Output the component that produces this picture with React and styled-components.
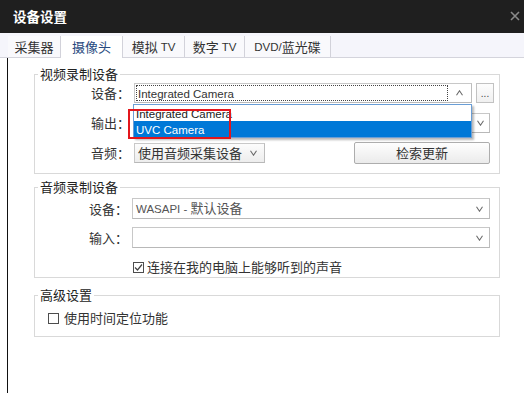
import React from "react";
import styled, { createGlobalStyle } from "styled-components";

const CJK = `"Noto Sans CJK SC", "Liberation Sans", sans-serif`;
const LAT = `"Liberation Sans", "Noto Sans CJK SC", sans-serif`;

const Global = createGlobalStyle`
  html, body { margin: 0; padding: 0; background: #fff; }
  body { font-family: ${CJK}; font-size: 13px; color: #333; }
  * { box-sizing: border-box; }
`;

const Window = styled.div`
  width: 524px;
  height: 393px;
  display: flex;
  flex-direction: column;
  background: #fff;
  overflow: hidden;
`;

const TitleBar = styled.div`
  height: 33px;
  flex: none;
  background: #1f1f1f;
  display: flex;
  align-items: center;
  justify-content: space-between;
  padding: 0 4px 1px 13px;
`;

const Title = styled.div`
  color: #fff;
  font-weight: bold;
  font-size: 13.5px;
  line-height: 16px;
`;

const CloseIcon = styled.svg`
  width: 10px;
  height: 10px;
  display: block;
`;

const TabBar = styled.div`
  height: 25px;
  flex: none;
  display: flex;
  align-items: flex-end;
  padding-left: 8px;
  background: #f5f5fb;
  border-bottom: 1px solid #d4d4dc;
`;

const Tab = styled.div`
  width: ${(p) => p.$w}px;
  height: ${(p) => (p.$active ? 22 : 21)}px;
  margin-bottom: ${(p) => (p.$active ? -1 : 0)}px;
  display: flex;
  align-items: center;
  justify-content: center;
  border-right: 1px solid #d2d2da;
  background: ${(p) => (p.$active ? "#ffffff" : "#f9f9fc")};
  color: ${(p) => (p.$active ? "#284a7e" : "#333")};
  font-size: 13px;
  line-height: 16px;
  padding-bottom: ${(p) => (p.$active ? 1 : 0)}px;
  white-space: pre;
`;

const Latin = styled.span`
  font-family: ${LAT};
  font-size: 11.5px;
  white-space: pre;
`;

const Body = styled.div`
  flex: 1;
  margin-left: 7px;
  border-left: 1px solid #111;
  padding: 8px 24px 0 26px;
  display: flex;
  flex-direction: column;
`;

const Group = styled.fieldset`
  margin: ${(p) => p.$mt}px 0 0;
  padding: ${(p) => p.$pt}px 9px ${(p) => p.$pb}px 0;
  border: 1px solid #d9d9d9;
  min-width: 0;
`;

const Legend = styled.legend`
  margin-left: 3px;
  padding: 0 2px;
  font-size: 13px;
  line-height: 16px;
  color: #222;
`;

const Row = styled.div`
  display: flex;
  align-items: center;
  height: ${(p) => p.$h || 20}px;
  margin-top: ${(p) => p.$mt || 0}px;
  padding-left: ${(p) => p.$pl || 0}px;
`;

const Label = styled.div`
  width: ${(p) => p.$w}px;
  flex: none;
  margin-right: 4px;
  text-align: right;
  line-height: 16px;
  color: #333;
`;

const Combo = styled.div`
  position: relative;
  flex: ${(p) => (p.$w ? "none" : "1")};
  width: ${(p) => (p.$w ? `${p.$w}px` : "auto")};
  height: ${(p) => p.$h || 20}px;
  border: 1px solid;
  border-color: #c8c8c8 #bdbdbd #b8b8b8 #c8c8c8;
  background: ${(p) => (p.$raised ? "linear-gradient(#fcfcfc, #ededed)" : "#fff")};
  display: flex;
  align-items: center;
  padding-left: ${(p) => (p.$focus ? 1 : 3)}px;
`;

const Value = styled.div`
  flex: 1;
  min-width: 0;
  line-height: 16px;
  white-space: nowrap;
  color: ${(p) => p.$color || "#333"};
`;

const FocusValue = styled.div`
  flex: 1;
  height: 16px;
  border: 1px dotted #444;
  line-height: 14px;
  padding-left: 1px;
  color: #333;
  white-space: nowrap;
`;

const ArrowCell = styled.div`
  width: ${(p) => p.$w || 20}px;
  flex: none;
  display: flex;
  align-items: center;
  justify-content: center;
`;

const Chevron = styled.svg`
  width: 7px;
  height: 6px;
  display: block;
`;

const MoreButton = styled.div`
  width: 18px;
  height: 20px;
  flex: none;
  margin-left: 4px;
  margin-right: -4px;
  border: 1px solid #c2c2c2;
  background: linear-gradient(#fdfdfd, #f0f0f0);
  display: flex;
  align-items: flex-end;
  justify-content: center;
  padding-bottom: 4px;
  font-family: ${LAT};
  font-size: 10px;
  line-height: 8px;
  color: #444;
`;

const DropList = styled.div`
  position: absolute;
  top: 20px;
  left: -2px;
  right: -1px;
  border: 1px solid #6a9ed6;
  background: #fff;
  box-shadow: 2px 2px 2px rgba(0, 0, 0, 0.28);
  z-index: 5;
`;

const DropItem = styled.div`
  height: 16px;
  line-height: 16px;
  padding-left: 2px;
  background: ${(p) => (p.$selected ? "#0078d7" : "#fff")};
  color: ${(p) => (p.$selected ? "#fff" : "#222")};
  white-space: nowrap;
`;

const Highlight = styled.div`
  position: absolute;
  top: 25px;
  left: -7px;
  width: 103px;
  height: 30px;
  border: 2px solid #e3161c;
  z-index: 6;
  pointer-events: none;
`;

const Button = styled.div`
  width: ${(p) => p.$w}px;
  height: 22px;
  margin-left: auto;
  border: 1px solid #adadad;
  border-radius: 2px;
  background: linear-gradient(#fefefe, #ebebeb);
  display: flex;
  align-items: center;
  justify-content: center;
  line-height: 16px;
  color: #333;
`;

const CheckRow = styled.label`
  display: flex;
  align-items: center;
  gap: ${(p) => p.$gap || 4}px;
  line-height: 16px;
  color: #333;
`;

const CheckBox = styled.span`
  width: 11px;
  height: 11px;
  flex: none;
  border: 1px solid #4d4d4d;
  background: #fff;
  display: inline-flex;
  align-items: center;
  justify-content: center;
`;

const Down = () => (
  <Chevron viewBox="0 0 7 6">
    <polyline points="0.5,0.8 3.5,5.2 6.5,0.8" fill="none" stroke="#6a6a6a" strokeWidth="1.1" />
  </Chevron>
);

const Up = () => (
  <Chevron viewBox="0 0 7 6">
    <polyline points="0.5,5.2 3.5,0.8 6.5,5.2" fill="none" stroke="#6a6a6a" strokeWidth="1.1" />
  </Chevron>
);

const Check = ({ checked }) => (
  <CheckBox>
    {checked && (
      <svg width="9" height="9" viewBox="0 0 9 9">
        <polyline points="1,4.5 3.5,7 8,1.5" fill="none" stroke="#444" strokeWidth="1.2" />
      </svg>
    )}
  </CheckBox>
);

const tabs = [
  { w: 53, label: <>采集器</> },
  { w: 62, label: <>摄像头</>, active: true },
  { w: 62, label: <>模拟<Latin> TV</Latin></> },
  { w: 60, label: <>数字<Latin> TV</Latin></> },
  { w: 86, label: <><Latin>DVD/</Latin>蓝光碟</> },
];

export default function App() {
  return (
    <>
      <Global />
      <Window>
        <TitleBar>
          <Title>设备设置</Title>
          <CloseIcon viewBox="0 0 10 10">
            <path d="M1 1 L9 9 M9 1 L1 9" stroke="#8a8a8a" strokeWidth="1.6" />
          </CloseIcon>
        </TitleBar>
        <TabBar>
          {tabs.map((t, i) => (
            <Tab key={i} $w={t.w} $active={t.active}>
              {t.label}
            </Tab>
          ))}
        </TabBar>
        <Body>
          <Group $mt={0} $pt={1} $pb={9}>
            <Legend>视频录制设备</Legend>
            <Row>
              <Label $w={95}>设备：</Label>
              <Combo $focus>
                <FocusValue>
                  <Latin>Integrated Camera</Latin>
                </FocusValue>
                <ArrowCell $w={23}>
                  <Up />
                </ArrowCell>
                <DropList>
                  <DropItem><Latin>Integrated Camera</Latin></DropItem>
                  <DropItem $selected><Latin>UVC Camera</Latin></DropItem>
                </DropList>
                <Highlight />
              </Combo>
              <MoreButton>...</MoreButton>
            </Row>
            <Row $mt={10}>
              <Label $w={95}>输出：</Label>
              <Combo>
                <Value />
                <ArrowCell $w={18}>
                  <Down />
                </ArrowCell>
              </Combo>
            </Row>
            <Row $mt={9} $h={22}>
              <Label $w={95}>音频：</Label>
              <Combo $w={131} $raised>
                <Value>使用音频采集设备</Value>
                <ArrowCell $w={22}>
                  <Down />
                </ArrowCell>
              </Combo>
              <Button $w={136}>检索更新</Button>
            </Row>
          </Group>

          <Group $mt={5} $pt={3} $pb={2}>
            <Legend>音频录制设备</Legend>
            <Row $h={21}>
              <Label $w={93}>设备：</Label>
              <Combo $h={21}>
                <Value $color="#555">
                  <Latin>WASAPI - </Latin>默认设备
                </Value>
                <ArrowCell $w={20}>
                  <Down />
                </ArrowCell>
              </Combo>
            </Row>
            <Row $h={21} $mt={8}>
              <Label $w={93}>输入：</Label>
              <Combo $h={21}>
                <Value />
                <ArrowCell $w={20}>
                  <Down />
                </ArrowCell>
              </Combo>
            </Row>
            <Row $h={16} $mt={11} $pl={98}>
              <CheckRow $gap={3}>
                <Check checked />
                连接在我的电脑上能够听到的声音
              </CheckRow>
            </Row>
          </Group>

          <Group $mt={9} $pt={7} $pb={10}>
            <Legend>高级设置</Legend>
            <Row $h={16} $pl={13}>
              <CheckRow $gap={5}>
                <Check />
                使用时间定位功能
              </CheckRow>
            </Row>
          </Group>
        </Body>
      </Window>
    </>
  );
}
